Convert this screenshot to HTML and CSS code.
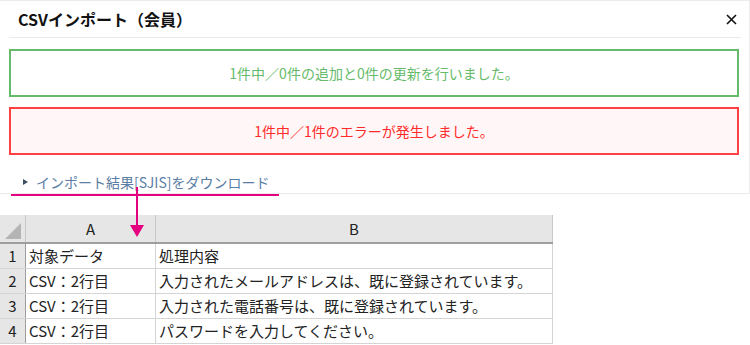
FILE: index.html
```html
<!DOCTYPE html>
<html lang="ja">
<head>
    <meta charset="UTF-8">
    <meta name="viewport" content="width=device-width, initial-scale=1.0">
    <title>CSVインポート（会員）</title>
    <link rel="stylesheet" href="styles.css">
</head>
<body>
    <div class="modal">
        <div class="modal-head">
            <h2 class="modal-title">CSVインポート（会員）</h2>
            <span class="modal-close">
                <svg width="11" height="11" viewBox="0 0 11 11"><path d="M1 1 L10 10 M10 1 L1 10" stroke="#111" stroke-width="1.6" fill="none"/></svg>
            </span>
        </div>
        <div class="modal-body">
            <div class="msg msg-ok">1件中／0件の追加と0件の更新を行いました。</div>
            <div class="msg msg-error">1件中／1件のエラーが発生しました。</div>
            <div class="download-row">
                <a class="download" href="#"><span class="caret"></span>インポート結果[SJIS]をダウンロード</a>
            </div>
        </div>
    </div>

    <!-- 矢印（注釈） -->
    <div class="callout-arrow"></div>

    <div class="sheet">
        <table class="grid">
            <tr class="col-heads">
                <th class="corner"><span class="corner-mark"></span></th>
                <th class="col-a">A</th>
                <th class="col-b">B</th>
            </tr>
            <tr>
                <th class="row-num">1</th>
                <td>対象データ</td>
                <td>処理内容</td>
            </tr>
            <tr>
                <th class="row-num">2</th>
                <td>CSV：2行目</td>
                <td>入力されたメールアドレスは、既に登録されています。</td>
            </tr>
            <tr>
                <th class="row-num">3</th>
                <td>CSV：2行目</td>
                <td>入力された電話番号は、既に登録されています。</td>
            </tr>
            <tr>
                <th class="row-num">4</th>
                <td>CSV：2行目</td>
                <td>パスワードを入力してください。</td>
            </tr>
        </table>
    </div>
</body>
</html>
```

FILE: styles.css
```css
/* styles.css */
body {
    margin: 0;
    background-color: #fff;
    font-family: "Noto Sans CJK JP", "Noto Sans", sans-serif;
    color: #222;
    position: relative;
}

.modal {
    width: 749px;
    border: 1px solid #ebebeb;
    border-left: none;
    background: #fff;
}

.modal-head {
    display: flex;
    align-items: center;
    justify-content: space-between;
    margin: 0 8px 0 9px;
    height: 36px;
    border-bottom: 1px solid #ebebeb;
}

.modal-title {
    margin: 0;
    padding-left: 9px;
    font-size: 16px;
    font-weight: bold;
    line-height: 20px;
    color: #111;
}

.modal-close {
    display: flex;
    margin-right: 4px;
    margin-top: 1px;
}

.modal-body {
    padding: 11px 10px 0 9px;
}

.msg {
    height: 44px;
    display: flex;
    justify-content: center;
    align-items: center;
    font-size: 14px;
}

.msg-ok {
    border: 2px solid #66bb6a;
    color: #66bb6a;
}

.msg-error {
    margin-top: 10px;
    border: 2px solid #ff4040;
    background-color: #fff7f7;
    color: #ff2a2a;
}

.download-row {
    height: 38px;
    padding-top: 11px;
    box-sizing: border-box;
}

.download {
    display: inline-flex;
    align-items: center;
    padding: 0 9px 2px 12px;
    margin-left: 2px;
    border-bottom: 2px solid #e4007f;
    font-size: 14px;
    line-height: 20px;
    color: #5a7ea4;
    text-decoration: none;
}

.caret {
    width: 0;
    height: 0;
    border-top: 3.5px solid transparent;
    border-bottom: 3.5px solid transparent;
    border-left: 5px solid #3f4f63;
    margin-right: 8px;
}

.callout-arrow {
    position: absolute;
    left: 136px;
    top: 187px;
    width: 2px;
    height: 40px;
    background: #e4007f;
    z-index: 2;
}

.callout-arrow::after {
    content: "";
    position: absolute;
    left: -6px;
    bottom: -10px;
    border-left: 7px solid transparent;
    border-right: 7px solid transparent;
    border-top: 12px solid #e4007f;
}

.sheet {
    margin-top: 21px;
}

.grid {
    border-collapse: collapse;
    font-size: 15px;
    line-height: 20px;
}

.grid th,
.grid td {
    padding: 0;
    height: 24px;
    border: 1px solid #d4d4d4;
    font-weight: normal;
}

.grid td {
    padding-left: 3px;
    white-space: nowrap;
}

.col-heads th {
    height: 27px;
    background: #e6e6e6;
    border-top: none;
    border-bottom: 2px solid #9e9e9e;
    border-left-color: #c8c8c8;
    border-right-color: #c8c8c8;
    color: #222;
}

.corner {
    width: 25px;
    border-left: none !important;
    position: relative;
}

.corner-mark {
    position: absolute;
    right: 4px;
    bottom: 3px;
    width: 0;
    height: 0;
    border-left: 16px solid transparent;
    border-bottom: 16px solid #b4b4b4;
}

.col-a {
    width: 129px;
}

.col-b {
    width: 396px;
}

.row-num {
    background: #e6e6e6;
    border-left: none !important;
    border-right-color: #9e9e9e !important;
    border-color: #c8c8c8;
    text-align: center;
}
```
